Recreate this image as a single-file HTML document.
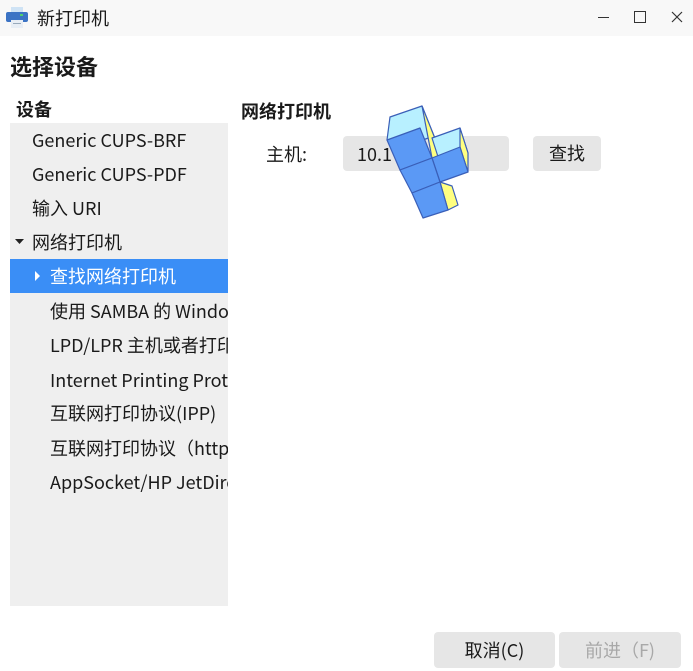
<!DOCTYPE html>
<html><head><meta charset="utf-8"><style>
body{margin:0;width:693px;height:671px;background:#fff;position:relative;overflow:hidden;font-family:"Noto Sans CJK SC","Liberation Sans",sans-serif;color:#1a1a1a}
.a{position:absolute;white-space:nowrap}
.tb{left:0;top:0;width:693px;height:36px;background:#f8f8f8}
.list{left:10px;top:123px;width:218px;height:483px;background:#efefef;overflow:hidden}
.row{position:absolute;height:34px;line-height:34px;font-size:18px;white-space:nowrap}
.btn{background:#e6e6e6;border-radius:4px;text-align:center;font-size:18px}
</style></head><body>
<div class="a tb"></div>
<svg class="a" style="left:6px;top:6px" width="22" height="24" viewBox="0 0 22 24"><rect x="5" y="1" width="12" height="6" fill="#cfe3f5"/><rect x="0" y="6" width="22" height="10" rx="2" fill="#3b73c4"/><rect x="14" y="8" width="3" height="2" fill="#4fd06b"/><rect x="5" y="14" width="12" height="8" fill="#e8eef5"/><rect x="7" y="17" width="8" height="1" fill="#9ab"/></svg>
<div class="a" style="left:37px;top:5px;font-size:18px;line-height:26px">新打印机</div>
<div class="a" style="left:598px;top:17px;width:11px;height:1px;background:#333"></div>
<div class="a" style="left:634px;top:11px;width:10px;height:10px;border:1px solid #333"></div>
<svg class="a" style="left:671px;top:11px" width="12" height="12"><path d="M1 1L11 11M11 1L1 11" stroke="#333" stroke-width="1.2"/></svg>
<div class="a" style="left:10px;top:51px;font-size:22px;line-height:30px;font-weight:bold">选择设备</div>
<div class="a" style="left:16px;top:96px;font-size:18px;line-height:26px;font-weight:bold">设备</div>
<div class="a list">
<div class="row" style="left:22px;top:0">Generic CUPS-BRF</div>
<div class="row" style="left:22px;top:34px">Generic CUPS-PDF</div>
<div class="row" style="left:22px;top:68px">输入 URI</div>
<svg class="a" style="left:5px;top:115px" width="10" height="8"><path d="M0 1H9L4.5 6Z" fill="#222"/></svg>
<div class="row" style="left:22px;top:102px">网络打印机</div>
<div class="row" style="left:0;top:136px;width:218px;background:#3a8ef6;color:#fff"><svg style="position:absolute;left:25px;top:12px" width="6" height="10"><path d="M0 0L5 5L0 10Z" fill="#fff"/></svg><span style="position:absolute;left:40px">查找网络打印机</span></div>
<div class="row" style="left:40px;top:171px">使用 SAMBA 的 Windows</div>
<div class="row" style="left:40px;top:205px">LPD/LPR 主机或者打印机</div>
<div class="row" style="left:40px;top:240px">Internet Printing Protocol</div>
<div class="row" style="left:40px;top:273px">互联网打印协议(IPP)</div>
<div class="row" style="left:40px;top:308px">互联网打印协议（https）</div>
<div class="row" style="left:40px;top:342px">AppSocket/HP JetDirect</div>
</div>
<div class="a" style="left:241px;top:98px;font-size:18px;line-height:26px;font-weight:bold">网络打印机</div>
<div class="a" style="left:266px;top:141px;font-size:18px;line-height:26px">主机:</div>
<div class="a" style="left:343px;top:136px;width:166px;height:35px;background:#e6e6e6;border-radius:4px"></div>
<div class="a" style="left:357px;top:141px;font-size:18px;line-height:26px">10.1</div>
<div class="a btn" style="left:533px;top:136px;width:68px;height:35px;line-height:35px">查找</div>
<svg class="a" style="left:380px;top:100px" width="100" height="125" viewBox="380 100 100 125" stroke="#3a5fb8" stroke-width="1.2" stroke-linejoin="round">
<polygon points="390,117 422,106 434,136 400,148 387,140" fill="#b8f0ff"/>
<polygon points="422,106 434,136 444,160 432,158" fill="#ffff80"/>
<polygon points="432,138 460,128 468,153 440,163" fill="#b8f0ff"/>
<polygon points="460,128 468,153 468,172 460,147" fill="#ffff80"/>
<polygon points="440,182 452,186 458,205 448,210" fill="#ffff80"/>
<polygon points="387,140 420,128 432,158 400,170" fill="#5b99f5"/>
<polygon points="432,158 460,147 468,172 440,182" fill="#5b99f5"/>
<polygon points="400,170 432,158 440,182 412,193" fill="#5b99f5"/>
<polygon points="412,193 440,182 448,210 423,218" fill="#5b99f5"/>
</svg>
<div class="a btn" style="left:434px;top:632px;width:121px;height:36px;line-height:36px">取消(C)</div>
<div class="a btn" style="left:559px;top:632px;width:122px;height:36px;line-height:36px;color:#a8a8a8">前进（F)</div>
</body></html>
